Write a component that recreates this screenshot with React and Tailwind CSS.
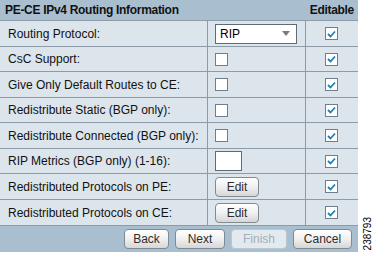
import React from "react";

const LINE = "border-[#8d9ba8]";

function Check({ checked }) {
  return (
    <div className="w-[13px] h-[13px] bg-white border border-[#6f7e8c] flex items-center justify-center">
      {checked && (
        <svg width="9" height="8" viewBox="0 0 9 8">
          <path d="M1 4 L3.5 6.5 L8 1.5" fill="none" stroke="#1f7db8" strokeWidth="1.8" />
        </svg>
      )}
    </div>
  );
}

function Btn({ children, w, disabled }) {
  return (
    <div
      className={`h-[20px] ${w} rounded-[4px] border flex items-center justify-center text-[12px] ${
        disabled
          ? "border-[#b9c7d2] bg-[#e3eaef] text-[#a3adb6]"
          : "border-[#7f8a93] bg-gradient-to-b from-[#ffffff] via-[#f0f0f0] to-[#d6d6d6] text-[#2d2d2d]"
      }`}
    >
      {children}
    </div>
  );
}

const rows = [
  { label: "Routing Protocol:", kind: "select", h: "h-[26px]" },
  { label: "CsC Support:", kind: "check", h: "h-[25px]" },
  { label: "Give Only Default Routes to CE:", kind: "check", h: "h-[26px]" },
  { label: "Redistribute Static (BGP only):", kind: "check", h: "h-[25px]" },
  { label: "Redistribute Connected (BGP only):", kind: "check", h: "h-[26px]" },
  { label: "RIP Metrics (BGP only) (1-16):", kind: "input", h: "h-[25px]" },
  { label: "Redistributed Protocols on PE:", kind: "edit", h: "h-[26px]" },
  { label: "Redistributed Protocols on CE:", kind: "edit", h: "h-[26px]" },
];

function Value({ kind }) {
  if (kind === "select")
    return (
      <div className="w-[82px] h-[20px] bg-white border border-[#5f6b75] flex items-center justify-between pl-[4px] pr-[6px] text-[12px] text-black">
        RIP
        <svg width="8" height="5" viewBox="0 0 8 5">
          <path d="M0 0 H8 L4 5 Z" fill="#7b7b7b" />
        </svg>
      </div>
    );
  if (kind === "check") return <Check />;
  if (kind === "input") return <div className="w-[27px] h-[20px] bg-white border border-[#5f6b75]" />;
  return <Btn w="w-[44px]">Edit</Btn>;
}

export default function App() {
  return (
    <div className="w-[377px] h-[255px] bg-white flex font-['Liberation_Sans',Arial,sans-serif]">
      <div className="w-[358px] flex flex-col">
        <div className={`h-[21px] bg-[#a9bfd0] border-b ${LINE} flex items-center justify-between pl-[5px] pr-[4px] text-[12px] font-bold text-[#111] tracking-[-0.3px]`}>
          <span>PE-CE IPv4 Routing Information</span>
          <span>Editable</span>
        </div>
        {rows.map((r) => (
          <div key={r.label} className={`${r.h} bg-[#dce5ec] border-b ${LINE} grid grid-cols-[208px_98px_52px] text-[12px] text-[#111]`}>
            <div className={`border-r ${LINE} flex items-center pl-[8px] whitespace-nowrap overflow-hidden`}>{r.label}</div>
            <div className={`border-r ${LINE} flex items-center pl-[7px]`}>
              <Value kind={r.kind} />
            </div>
            <div className="flex items-center justify-center pr-[1px]">
              <Check checked />
            </div>
          </div>
        ))}
        <div className="h-[26px] bg-[#a9bfd0] flex items-center justify-end gap-[6px] pr-[6px]">
          <Btn w="w-[45px]">Back</Btn>
          <Btn w="w-[50px]">Next</Btn>
          <Btn w="w-[56px]" disabled>Finish</Btn>
          <Btn w="w-[59px]">Cancel</Btn>
        </div>
      </div>
      <div className="flex-1 flex items-end justify-center pb-[5px]">
        <div className="[writing-mode:vertical-rl] rotate-180 text-[10px] leading-none text-black">238793</div>
      </div>
    </div>
  );
}
